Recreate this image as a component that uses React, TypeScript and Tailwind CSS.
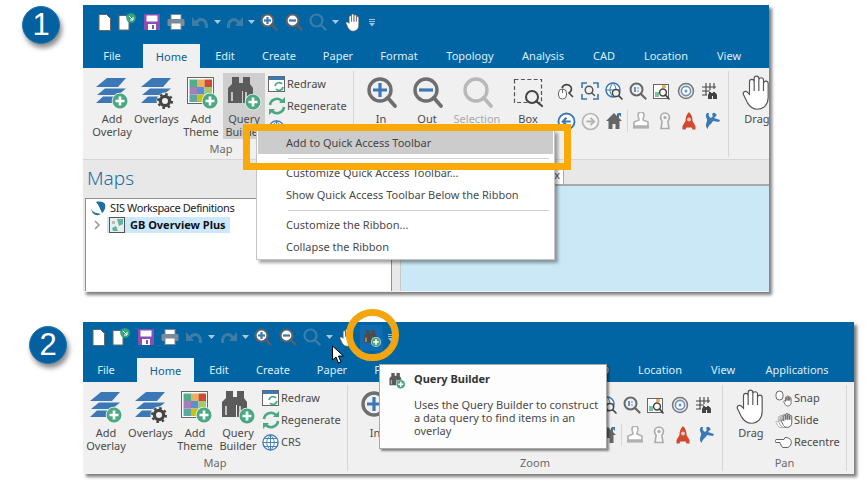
import React from "react";

const G = "#4aa983";
const BL = "#3b78b5";
const HAND = "M7 13V5.500a1.400 1.400 0 0 1 2.800 0V11V3.500a1.400 1.400 0 0 1 2.800 0V11V4.500a1.400 1.400 0 0 1 2.800 0V11V6.500a1.400 1.400 0 0 1 2.800 0V15c0 4-2.500 7-6.500 7-3 0-4.500-1.500-6-4L3.500 13.500c-1-2 1.500-3 2.500-1.500l1 1z";

function PlusB({ cx, cy, r = 7.5 }: { cx: number; cy: number; r?: number }) {
  return (
    <g>
      <circle cx={cx} cy={cy} r={r + 0.8} fill="#f0f0f0" />
      <circle cx={cx} cy={cy} r={r} fill={G} />
      <path d={`M${cx - r * 0.6} ${cy}H${cx + r * 0.6}M${cx} ${cy - r * 0.6}V${cy + r * 0.6}`} stroke="#fff" strokeWidth={r * 0.36} />
    </g>
  );
}
function Layers() {
  return (
    <g fill={BL}>
      <polygon points="14,3 33,3 25,12 3,12" />
      <polygon points="12,13.500 33,13.500 25,20 4,20" />
      <polygon points="10,21.500 28,21.500 22,28 3,28" />
    </g>
  );
}
const Big = ({ children }: { children: React.ReactNode }) => (
  <svg width="38" height="36" viewBox="0 0 38 36" className="shrink-0">{children}</svg>
);
const AddOverlayI = () => <Big><Layers /><PlusB cx={27} cy={26} /></Big>;
const OverlaysI = () => (
  <Big>
    <Layers />
    <circle cx="27" cy="26" r="8.500" fill="#f0f0f0" />
    <circle cx="27" cy="26" r="4.600" fill="none" stroke="#444" strokeWidth="3.200" />
    <circle cx="27" cy="26" r="7" fill="none" stroke="#444" strokeWidth="2" strokeDasharray="2.600 2.900" />
  </Big>
);
const ThemeI = () => {
  const c = ["#4fae87", "#eab060", "#cf4a2e", "#a97cbc", "#5b8fd0", "#a3c96b", "#5da8a0", "#c9bf16", "#bbb"];
  return (
    <Big>
      <rect x="5.500" y="2.500" width="26" height="26" fill="#fff" stroke="#666" />
      {c.map((f, i) => (
        <rect key={i} x={7.5 + (i % 3) * 7.5} y={4.5 + Math.floor(i / 3) * 7.5} width="7.5" height="7.5" fill={f} />
      ))}
      <PlusB cx={28} cy={26} />
    </Big>
  );
};
const BinoPath = ({ fill = "#5b5b5b" }: { fill?: string }) => (
  <g>
    <path fill={fill} d="M7 2h7v6h4V2h7v7l3 4v15H18V16h-1v12H3V13l4-4z" />
    <path d="M7 17v9M21 17v9" stroke="#f0f0f0" strokeWidth="1.400" />
  </g>
);
const BinoI = () => <Big><BinoPath /><PlusB cx={28} cy={27} /></Big>;

function Mag({ cx, cy, r, sw, color, hx, hy, fill = "none" }: { cx: number; cy: number; r: number; sw: number; color: string; hx: number; hy: number; fill?: string }) {
  const k = 0.707 * r;
  return (
    <g>
      <circle cx={cx} cy={cy} r={r} fill={fill} stroke={color} strokeWidth={sw} />
      <path d={`M${cx + k} ${cy + k}L${hx} ${hy}`} stroke={color} strokeWidth={sw * 1.1} strokeLinecap="round" />
    </g>
  );
}
const InI = () => (
  <Big>
    <Mag cx={18} cy={15} r={11} sw={3.4} color="#6e6e6e" hx={33} hy={31} />
    <path d="M11 15H25M18 8V22" stroke={BL} strokeWidth="3.200" />
  </Big>
);
const OutI = () => (
  <Big>
    <Mag cx={18} cy={15} r={11} sw={3.4} color="#6e6e6e" hx={33} hy={31} />
    <path d="M11 15H25" stroke={BL} strokeWidth="3.200" />
  </Big>
);
const SelI = () => <Big><Mag cx={18} cy={15} r={11} sw={3.4} color="#b8b8b8" hx={33} hy={31} /></Big>;
const BoxI = () => (
  <Big>
    <rect x="5.500" y="4.500" width="27" height="23" fill="none" stroke="#555" strokeWidth="1.200" strokeDasharray="4 2.400" />
    <Mag cx={23} cy={22} r={6} sw={2} color="#444" hx={33} hy={31} fill="#f0f0f0" />
  </Big>
);

const S = ({ children, s = 18 }: { children: React.ReactNode; s?: number }) => (
  <svg width={s} height={s} viewBox="0 0 18 18" className="shrink-0">{children}</svg>
);
const icons: Record<string, React.ReactNode> = {
  mouse: (
    <S>
      <rect x="1.500" y="7" width="8" height="10" rx="4" fill="#fff" stroke="#666" />
      <path d="M5.500 7v4" stroke="#666" />
      <path d="M5 6a5 5 0 0 1 9-1 5 5 0 0 1-2 6l4 4" fill="none" stroke="#444" strokeWidth="1.600" />
    </S>
  ),
  corners: (
    <S>
      <path d="M1 6V1h5M12 1h5v5M17 12v5h-5M6 17H1v-5" fill="none" stroke={BL} strokeWidth="1.600" />
      <Mag cx={8} cy={8} r={3.8} sw={1.4} color="#555" hx={13.5} hy={13.5} />
    </S>
  ),
  globe: (
    <S>
      <circle cx="8" cy="8" r="7" fill="#fff" stroke={BL} strokeWidth="1.500" />
      <path d="M1 8h14M8 1c-4 4-4 10 0 14M8 1c4 4 4 10 0 14" fill="none" stroke={BL} />
      <Mag cx={11} cy={11} r={3.6} sw={1.5} color="#444" hx={17} hy={17} fill="#f0f0f0" />
    </S>
  ),
  scale: (
    <S>
      <Mag cx={7.5} cy={7.5} r={6} sw={2} color="#666" hx={16.5} hy={16.5} />
      <path d="M6 5v5M9 5.500v1M9 8.500v1" stroke={BL} strokeWidth="1.500" />
    </S>
  ),
  pic: (
    <S>
      <rect x="0.500" y="2.500" width="15" height="14" fill="#fff" stroke="#666" />
      <rect x="2" y="10" width="4" height="5" fill="#7cc3a0" />
      <rect x="9" y="3" width="4" height="3" fill="#eab060" />
      <Mag cx={10} cy={10.5} r={3.4} sw={1.5} color="#444" hx={16} hy={17} fill="#fff" />
    </S>
  ),
  target: (
    <S>
      <circle cx="9" cy="9" r="7.500" fill="#ececec" stroke="#777" strokeWidth="1.500" />
      <circle cx="9" cy="9" r="4.600" fill="#fff" stroke="#6d93bd" strokeWidth="1.600" />
      <circle cx="9" cy="9" r="1.500" fill="#6d93bd" />
    </S>
  ),
  grid: (
    <S>
      <path d="M1 5h14M1 9h8M1 13h5M5 1v12M9 1v7M13 1v6" stroke="#444" strokeWidth="1.100" fill="none" />
      <path d="M8 10h2v1h2v-1h2v1h1l1 2v4h-4v-3h-1v3H7v-4l1-2z" fill="#444" />
    </S>
  ),
  back: (
    <S s={19}>
      <circle cx="9" cy="9" r="7.600" fill="#fff" stroke={BL} strokeWidth="1.800" />
      <path d="M13 9H6M9 5.500L5.500 9 9 12.500" fill="none" stroke={BL} strokeWidth="2" />
    </S>
  ),
  fwd: (
    <S s={19}>
      <circle cx="9" cy="9" r="7.600" fill="#f4f4f4" stroke="#b5b5b5" strokeWidth="1.600" />
      <path d="M5 9h7M9 5.500L12.500 9 9 12.500" fill="none" stroke="#b5b5b5" strokeWidth="1.800" />
    </S>
  ),
  home: (
    <S>
      <path d="M9 1L1 9h2.500v8h4v-5h3v5h4V9H17l-3-3V2h-2v2z" fill="#666" />
      <path d="M12 1h4v4z" fill={BL} />
    </S>
  ),
  stamp: (
    <S>
      <path d="M6 3a3 3 0 0 1 6 0c0 2-1 3-1 5l5 2v4H2v-4l5-2c0-2-1-3-1-5z" fill="#fff" stroke="#b0b0b0" strokeWidth="1.600" />
      <rect x="1" y="14" width="16" height="2.600" fill="#b0b0b0" />
    </S>
  ),
  key: (
    <S>
      <path d="M4.500 5.500a4.500 4.500 0 0 1 9 0c0 2-1.400 3-1.600 4l1.100 7h-8l1.100-7c-.2-1-1.600-2-1.600-4z" fill="#f4f4f4" stroke="#aaa" strokeWidth="1.600" />
      <circle cx="9" cy="5.500" r="1.600" fill="#aaa" />
    </S>
  ),
  rocket: (
    <S>
      <path d="M9 0c3 3 3.500 6 3.500 9l3 5v3.500h-3l-.8-2H6.300l-.8 2h-3V14l3-5c0-3 .5-6 3.500-9z" fill="#cf4a2e" />
      <circle cx="9" cy="7.500" r="2" fill="#f3c5b8" />
    </S>
  ),
  fig: (
    <S>
      <path d="M3 1c-3 4 1 5 0 8s-2 6 1 8c-1-3 4-5 5-8l6 1 1-2-6-2 3-3-2-1-4 4C5 5 4 3 5 1z" fill={BL} />
      <circle cx="10" cy="2.500" r="1.800" fill={BL} />
    </S>
  ),
};

const Q = ({ w, children }: { w: string; children?: React.ReactNode }) => (
  <div className={`${w} flex justify-center items-center h-[18px]`}>{children}</div>
);
const Caret = () => (
  <svg width="7" height="5" viewBox="0 0 7 5"><polygon points="0,0 7,0 3.500,4" fill="#a9c6da" /></svg>
);
const QMag = ({ kind }: { kind: "in" | "out" | "off" }) => (
  <svg width="18" height="18" viewBox="0 0 18 18">
    <Mag cx={7.5} cy={7.5} r={6} sw={2.2} color={kind === "off" ? "#3f7da6" : "#5a6068"} hx={16.5} hy={16.5} fill={kind === "off" ? "none" : "#fff"} />
    {kind !== "off" && <path d="M4 7.500H11" stroke={BL} strokeWidth="2.200" />}
    {kind === "in" && <path d="M7.500 4V11" stroke={BL} strokeWidth="2.200" />}
  </svg>
);
const Customise = () => (
  <svg width="8" height="9" viewBox="0 0 8 9"><path d="M1 1.500H7M1 3.500H7" stroke="#9fc0d6" /><polygon points="1,5 7,5 4,8.500" fill="#9fc0d6" /></svg>
);

function Qat({ second }: { second?: boolean }) {
  return (
    <div className={second ? "flex items-start pt-[6px] pl-[5px] h-[36px]" : "flex items-start pt-[8px] pl-[11px] h-[39px]"}>
      <Q w="w-[20px]">
        <svg width="13" height="17" viewBox="0 0 13 17"><path d="M1 .5H8.500L12.500 4.500V16.500H1z" fill="#fff" stroke="#666" /></svg>
      </Q>
      <Q w="w-[26px]">
        <svg width="19" height="18" viewBox="0 0 19 18">
          <path d="M1 2.500H8L11 5.500V17H1z" fill="#fff" stroke="#666" />
          <circle cx="13" cy="5" r="4.800" fill="#35a77a" />
          <path d="M11 3l4 4M15 4v3h-3" stroke="#fff" fill="none" />
        </svg>
      </Q>
      <Q w="w-[24px]">
        <svg width="16" height="16" viewBox="0 0 16 16">
          <path d="M0 0H16V16H0z" fill="#8a4fb0" />
          <rect x="2.500" y="1.500" width="11" height="6" fill="#fff" />
          <rect x="4" y="10" width="8" height="6" fill="#fff" />
          <rect x="8" y="11" width="2" height="4" fill="#8a4fb0" />
        </svg>
      </Q>
      <Q w="w-[24px]">
        <svg width="18" height="16" viewBox="0 0 18 16">
          <rect x="4" y="0.500" width="10" height="5" fill="#fff" stroke="#7b8a96" />
          <rect x="0.500" y="5" width="17" height="7" rx="1" fill="#7b8a96" />
          <rect x="4" y="9" width="10" height="6.500" fill="#fff" stroke="#7b8a96" />
        </svg>
      </Q>
      <Q w="w-[24px]">
        <svg width="17" height="13" viewBox="0 0 17 13">
          <path d="M4 7C8 1 15 3 14.500 12" fill="none" stroke="#3f7da6" strokeWidth="3" />
          <polygon points="0,1 0,10 8,10" fill="#3f7da6" />
        </svg>
      </Q>
      <Q w="w-[10px]"><Caret /></Q>
      <Q w="w-[24px]">
        <svg width="17" height="13" viewBox="0 0 17 13">
          <path d="M13 7C9 1 2 3 2.500 12" fill="none" stroke="#3f7da6" strokeWidth="3" />
          <polygon points="17,1 17,10 9,10" fill="#3f7da6" />
        </svg>
      </Q>
      <Q w="w-[10px]"><Caret /></Q>
      <Q w="w-[26px]"><QMag kind="in" /></Q>
      <Q w="w-[24px]"><QMag kind="out" /></Q>
      <Q w="w-[24px]"><QMag kind="off" /></Q>
      <Q w="w-[10px]"><Caret /></Q>
      <Q w="w-[26px]">
        <svg width="18" height="19" viewBox="2 1 19 22"><path d={HAND} fill="#fff" stroke="#555" strokeWidth="0.700" /></svg>
      </Q>
      {second && (
        <div className="w-[23px] h-[26px] -mt-[3px] bg-[#0d6cb3] flex justify-center items-center">
          <svg width="20" height="18" viewBox="0 0 38 36"><BinoPath fill="#4c4c4c" /><PlusB cx={27} cy={26} r={9} /></svg>
        </div>
      )}
      <Q w={second ? "w-[16px]" : "w-[12px]"}><Customise /></Q>
    </div>
  );
}

const TABS: [string, string][] = [
  ["Edit", "w-[50px]"], ["Create", "w-[58px]"], ["Paper", "w-[60px]"], ["Format", "w-[62px]"],
  ["Topology", "w-[80px]"], ["Analysis", "w-[66px]"], ["CAD", "w-[56px]"], ["Location", "w-[68px]"], ["View", "w-[58px]"],
];
function Tabs({ second }: { second?: boolean }) {
  return (
    <div className={second ? "flex h-[24px] items-center text-[#dfeef8]" : "flex h-[24px] items-center pl-[6px] text-[#dfeef8]"}>
      <div className="w-[46px] text-center">File</div>
      <div className="ml-[8px] w-[57px] h-[24px] leading-[25px] bg-[#f0f0f0] text-[#0e5f96] text-center">Home</div>
      {TABS.map(([t, w]) => (
        <div key={t} className={`${w} text-center`}>{t}</div>
      ))}
      {second && <div className="w-[90px] text-center">Applications</div>}
    </div>
  );
}

function BigBtn({ w, icon, lines, off, hl }: { w: string; icon: React.ReactNode; lines: string[]; off?: boolean; hl?: boolean }) {
  return (
    <div className={`${w} ${hl ? "bg-[#cfcfcf]" : ""} ${off ? "text-[#aaa]" : ""} h-[66px] flex flex-col items-center`}>
      <div className="h-[39px] pt-[2px] flex justify-center w-full">{icon}</div>
      {lines.map((l) => (
        <div key={l} className="h-[13px] leading-[13px] whitespace-nowrap">{l}</div>
      ))}
    </div>
  );
}
function SmallRow({ icon, text }: { icon: React.ReactNode; text: string }) {
  return (
    <div className="h-[22px] flex items-center">
      <div className="w-[19px] flex justify-center -ml-[1px] mr-[1px]">{icon}</div>
      <span className="whitespace-nowrap">{text}</span>
    </div>
  );
}
function Group({ w, label, children }: { w: string; label?: string; children: React.ReactNode }) {
  return (
    <div className={`${w} shrink-0 my-[3px] h-[86px] border-r border-[#d6d6d6]`}>
      <div className="h-[71px] pt-[2px] flex">{children}</div>
      <div className="h-[14px] leading-[14px] text-center text-[#6a6a6a]">{label}</div>
    </div>
  );
}

const RedrawI = (
  <svg width="18" height="17" viewBox="0 0 18 17">
    <rect x="0.500" y="0.500" width="16" height="15" fill="#fff" stroke="#666" />
    <rect x="1" y="1" width="15" height="3" fill={BL} />
    <path d="M7 10a4 4 0 0 1 7-2M15 11a4 4 0 0 1-7 2" fill="none" stroke={G} strokeWidth="1.800" />
  </svg>
);
const RegenI = (
  <svg width="18" height="18" viewBox="0 0 18 18">
    <path d="M2 8a7 7 0 0 1 12-4M16 10a7 7 0 0 1-12 4" fill="none" stroke={G} strokeWidth="2.600" />
    <polygon points="11,6 17,6 17,0" fill={G} />
    <polygon points="7,12 1,12 1,18" fill={G} />
  </svg>
);
const CrsI = (
  <svg width="17" height="17" viewBox="0 0 17 17">
    <circle cx="8.500" cy="8.500" r="7.600" fill="#fff" stroke={BL} strokeWidth="1.300" />
    <path d="M1 8.500h15M2 4.500h13M2 12.500h13M8.500 1v15M8.500 1c-5 4-5 11 0 15M8.500 1c5 4 5 11 0 15" fill="none" stroke={BL} strokeWidth="0.900" />
  </svg>
);
const DragI = () => (
  <svg width="30" height="36" viewBox="2.500 1.500 18 21.500" className="shrink-0">
    <path d={HAND} fill="#fff" stroke="#555" strokeWidth="0.700" />
  </svg>
);
const SnapI = (
  <svg width="18" height="17" viewBox="0 0 18 17">
    <rect x="1" y="1" width="7" height="9" rx="3.500" fill="#fff" stroke="#666" />
    <g transform="translate(7 5) scale(0.5)"><path d={HAND} fill="#fff" stroke="#666" strokeWidth="1.800" /></g>
  </svg>
);
const SlideI = (
  <svg width="18" height="17" viewBox="0 0 18 17">
    <g transform="translate(-1 2) scale(0.62)"><path d={HAND} fill="#fff" stroke="#aaa" strokeWidth="1.400" /></g>
    <g transform="translate(1.500 1) scale(0.66)"><path d={HAND} fill="#fff" stroke="#999" strokeWidth="1.400" /></g>
    <g transform="translate(4 0) scale(0.7)"><path d={HAND} fill="#fff" stroke="#555" strokeWidth="1.300" /></g>
  </svg>
);
const RecentreI = (
  <svg width="18" height="14" viewBox="0 0 18 14">
    <path d="M1 4.500h8l1-2c3 0 5 1 6 3 1 3-1 7-4 7H8c-1 0-1-1-1-1.500-1 0-1.500-1-1-2-1 0-1-1-1-1.500H1c-1 0-1-2.500 0-2.500z" fill="#fff" stroke="#555" strokeWidth="0.900" />
  </svg>
);

function Ribbon({ second, hover }: { second?: boolean; hover?: boolean }) {
  return (
    <div className={second ? "flex h-[92px] bg-[#f0f0f0] text-[#4a4a4a]" : "flex h-[92px] bg-[#f0f0f0] text-[#4a4a4a] pl-[6px] border-b border-[#d6d6d6]"}>
      <Group w="w-[265px]" label="Map">
        <div className="w-[1px]" />
        <BigBtn w="w-[44px]" icon={<AddOverlayI />} lines={["Add", "Overlay"]} />
        <BigBtn w="w-[45px]" icon={<OverlaysI />} lines={["Overlays"]} />
        <BigBtn w="w-[44px]" icon={<ThemeI />} lines={["Add", "Theme"]} />
        <BigBtn w="w-[42px]" icon={<BinoI />} lines={["Query", "Builder"]} hl={hover} />
        <div className="flex flex-col pl-[3px]">
          <SmallRow icon={RedrawI} text="Redraw" />
          <SmallRow icon={RegenI} text="Regenerate" />
          <SmallRow icon={CrsI} text="CRS" />
        </div>
      </Group>
      <Group w="w-[375px]" label={second ? "Zoom" : undefined}>
        <div className="w-[6px]" />
        <BigBtn w="w-[42px]" icon={<InI />} lines={["In"]} />
        <BigBtn w="w-[50px]" icon={<OutI />} lines={second ? [] : ["Out"]} />
        <BigBtn w="w-[50px]" icon={<SelI />} lines={second ? [] : ["Selection"]} off />
        <BigBtn w="w-[52px]" icon={<BoxI />} lines={second ? [] : ["Box"]} />
        <div className="flex flex-col pt-[3px]">
          <div className="flex h-[30px] items-center">
            {["mouse", "corners", "globe", "scale", "pic", "target", "grid"].map((k) => (
              <div key={k} className="w-[24px] flex justify-center">{icons[k]}</div>
            ))}
          </div>
          <div className="flex h-[30px] items-center">
            {["back", "fwd", "home"].map((k) => (
              <div key={k} className="w-[24px] flex justify-center">{icons[k]}</div>
            ))}
            <div className="w-[3px] flex justify-center"><div className="w-px h-[22px] bg-[#d6d6d6]" /></div>
            {["stamp", "key", "rocket", "fig"].map((k) => (
              <div key={k} className="w-[24px] flex justify-center">{icons[k]}</div>
            ))}
          </div>
        </div>
      </Group>
      <Group w="w-[124px]" label={second ? "Pan" : undefined}>
        <div className="w-[6px]" />
        <BigBtn w="w-[44px]" icon={<DragI />} lines={["Drag"]} />
        {second && (
          <div className="flex flex-col pl-[2px]">
            <SmallRow icon={SnapI} text="Snap" />
            <SmallRow icon={SlideI} text="Slide" />
            <SmallRow icon={RecentreI} text="Recentre" />
          </div>
        )}
      </Group>
    </div>
  );
}

function Badge({ n, cls }: { n: string; cls: string }) {
  return (
    <div className={`${cls} w-[38px] h-[38px] shrink-0 rounded-full bg-[#05609f] border border-[#1a76b5] shadow-[2px_4px_5px_rgba(0,0,0,0.45)] flex items-center justify-center text-white text-[31px] font-['Liberation_Sans',sans-serif]`}>
      {n}
    </div>
  );
}

function Panes() {
  return (
    <div className="flex h-[131px] bg-[#e8e8e8]">
      <div className="w-[309px] flex flex-col shrink-0">
        <div className="h-[38px] pl-[4px] pt-[4px] text-[19px] leading-[28px] font-light text-[#1c6ea4]">Maps</div>
        <div className="flex-1 ml-[2px] bg-white border-t border-l border-r border-[#8f8f8f] text-[#222]">
          <div className="flex items-center h-[17px] pl-[5px] mt-[1px]">
            <svg width="15" height="15" viewBox="0 0 15 15"><path d="M5 1c4-1 8 0 9 2 1 4-1 8-3 9C9 8 8 4 5 1zM0 8c2 4 6 4 10 5-3 2-8 2-10-5z" fill="#1c6ea4" /></svg>
            <span className="ml-[4px] whitespace-nowrap tracking-[-0.4px]">SIS Workspace Definitions</span>
          </div>
          <div className="flex items-center h-[16px] pl-[8px]">
            <svg width="7" height="10" viewBox="0 0 7 10"><path d="M1 1l4 4-4 4" fill="none" stroke="#9a9a9a" strokeWidth="1.600" /></svg>
            <div className="ml-[6px] flex items-center bg-[#cce8ff] h-[16px] pl-[2px] pr-[4px]">
              <svg width="16" height="16" viewBox="0 0 16 16" className="shrink-0">
                <rect x="0.500" y="0.500" width="15" height="15" fill="#e8eeea" stroke="#555" />
                <path d="M8 2h6v5l-4 2zM3 11l4-2 2 5H4z" fill="#5db5a8" />
                <path d="M3 4h3v3H3z" fill="#bbb" />
              </svg>
              <span className="ml-[5px] font-bold whitespace-nowrap text-[#111]">GB Overview Plus</span>
            </div>
          </div>
        </div>
      </div>
      <div className="w-[9px] shrink-0 mt-[38px] border-r border-[#c9c9c9]" />
      <div className="flex-1 flex flex-col">
        <div className="h-[26px] pt-[8px] border-b-2 border-[#a9a9a9]">
          <div className="w-[163px] h-[16px] bg-white border-r border-[#a9a9a9] text-right pr-[3px] leading-[14px] text-[#555]">x</div>
        </div>
        <div className="flex-1 bg-[#cbe8f6]" />
      </div>
    </div>
  );
}

function MenuItem({ t, active }: { t: string; active?: boolean }) {
  return (
    <div className={active ? "h-[23px] leading-[24px] bg-[#cccccc] pl-[28px] text-[#444] mx-px" : "h-[22px] leading-[22px] pl-[29px] text-[#4a4a4a]"}>{t}</div>
  );
}
const MenuSep = () => (
  <div className="h-[8px] flex items-center pl-[31px] pr-[5px]"><div className="h-px w-full bg-[#d0d0d0]" /></div>
);

export default function App() {
  return (
    <div className="relative w-[867px] h-[493px] bg-white overflow-hidden font-['Noto_Sans',sans-serif] text-[11px]">
      <div className="flex items-start ml-[22px] pt-[5px]">
        <Badge n="1" cls="mt-[1px]" />
        <div className="ml-[23px] w-[686px] h-[287px] overflow-hidden bg-[#f0f0f0] shadow-[3px_3px_3px_rgba(0,0,0,0.5)]">
          <div className="bg-[#0065a2]">
            <Qat />
            <Tabs />
          </div>
          <Ribbon hover />
          <Panes />
        </div>
      </div>
      <div className="flex items-start ml-[29px] mt-[30px]">
        <Badge n="2" cls="mt-[4px]" />
        <div className="ml-[16px] w-[771px] h-[152px] overflow-hidden bg-[#f0f0f0] shadow-[3px_3px_3px_rgba(0,0,0,0.5)]">
          <div className="bg-[#0065a2]">
            <Qat second />
            <Tabs second />
          </div>
          <Ribbon second />
        </div>
      </div>

      {/* context menu with highlight */}
      <div className="absolute left-[256px] top-[130px] w-[299px] h-[130px] bg-white border border-[#c4c4c4] shadow-[3px_3px_3px_rgba(0,0,0,0.35)]">
        <MenuItem t="Add to Quick Access Toolbar" active />
        <MenuSep />
        <MenuItem t="Customize Quick Access Toolbar..." />
        <MenuItem t="Show Quick Access Toolbar Below the Ribbon" />
        <MenuSep />
        <MenuItem t="Customize the Ribbon..." />
        <MenuItem t="Collapse the Ribbon" />
      </div>
      <div className="absolute left-[243px] top-[124px] w-[328px] h-[46px] border-[7px] border-[#f9a908]" />

      {/* ring */}
      <div className="absolute left-[346px] top-[309px] w-[53px] h-[52px] rounded-full border-[7px] border-[#f2a50f]" />

      {/* tooltip */}
      <div className="absolute left-[379px] top-[364px] w-[228px] h-[85px] bg-[#fdfdfd] border border-[#a8a8a8] shadow-[2px_2px_2px_rgba(0,0,0,0.45)] flex text-[#4a4a4a]">
        <div className="w-[34px] pl-[8px] pt-[7px]">
          <svg width="18" height="17" viewBox="0 0 38 36"><BinoPath /><PlusB cx={27} cy={26} r={9} /></svg>
        </div>
        <div className="flex-1 pt-[7px]">
          <div className="h-[14px] leading-[14px] font-bold text-[#333]">Query Builder</div>
          <div className="mt-[12px] leading-[13px] whitespace-pre">{"Uses the Query Builder to construct\na data query to find items in an\noverlay"}</div>
        </div>
      </div>

      {/* cursor */}
      <svg className="absolute left-[331px] top-[345px]" width="14" height="20" viewBox="0 0 14 20">
        <path d="M1.500 1V15L5 12l2.500 6 2.500-1-2.500-6H12.500z" fill="#fff" stroke="#000" />
      </svg>
    </div>
  );
}
